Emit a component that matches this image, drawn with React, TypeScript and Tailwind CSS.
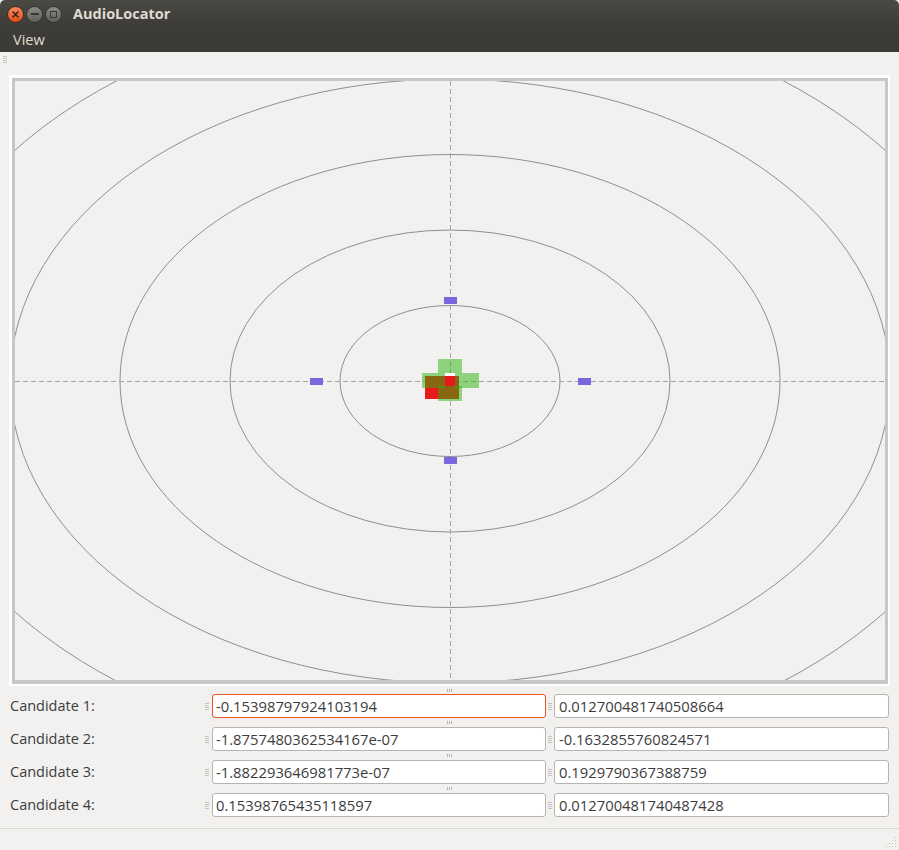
import React from 'react';

const candidates = [
  ['-0.15398797924103194', '0.012700481740508664'],
  ['-1.8757480362534167e-07', '-0.1632855760824571'],
  ['-1.882293646981773e-07', '0.1929790367388759'],
  ['0.15398765435118597', '0.012700481740487428'],
];

// little "≡" grip drawn by Qt splitters / toolbars
function HGrip() {
  return (
    <div className="flex flex-col gap-[1px] w-[4px]">
      <div className="h-[1px] bg-[#c4c2bf]" />
      <div className="h-[1px] bg-[#c4c2bf]" />
      <div className="h-[1px] bg-[#c4c2bf]" />
      <div className="h-[1px] bg-[#c4c2bf]" />
    </div>
  );
}

function VGrip() {
  return (
    <div className="flex gap-[1px] h-[3px]">
      <div className="w-[1px] bg-[#b9b7b4]" />
      <div className="w-[1px] bg-[#b9b7b4]" />
      <div className="w-[1px] bg-[#b9b7b4]" />
    </div>
  );
}

function Plot() {
  const cx = 435;
  const cy = 300;
  const rings = [1, 2, 3, 4, 5];
  return (
    <svg width="870" height="599" className="block">
      {rings.map(k => (
        <ellipse key={k} cx={cx} cy={cy} rx={110 * k} ry={75.5 * k} fill="none" stroke="#8f8f8f" strokeWidth="1" />
      ))}
      <line x1="0" y1={cy + 0.5} x2="870" y2={cy + 0.5} stroke="#a3a3a3" strokeDasharray="5 3" />
      <line x1={cx + 0.5} y1="0" x2={cx + 0.5} y2="599" stroke="#a3a3a3" strokeDasharray="5 3" />

      {/* microphones */}
      <rect x="429" y="216" width="13" height="7" fill="#7a67de" />
      <rect x="429" y="376" width="13" height="7" fill="#7a67de" />
      <rect x="295" y="297" width="13" height="7" fill="#7a67de" />
      <rect x="563" y="297" width="13" height="7" fill="#7a67de" />

      {/* estimate */}
      <rect x="430" y="292" width="10" height="3" fill="#ffffff" />
      <rect x="410" y="295" width="34" height="23" fill="#e8191b" />

      {/* candidates */}
      <g fill="rgb(40,180,10)" fillOpacity="0.5">
        <rect x="423" y="278" width="24" height="14" />
        <rect x="407" y="292" width="23" height="15" />
        <rect x="440" y="292" width="24" height="15" />
        <rect x="423" y="305" width="24" height="15" />
      </g>
    </svg>
  );
}

export default function App() {
  return (
    <div className="w-[899px] h-[850px] flex flex-col bg-[#f2f1f0] font-['Open_Sans',sans-serif] text-[14.5px] text-[#3c3c3c] overflow-hidden">
      {/* title bar */}
      <div className="h-[28px] flex items-center bg-gradient-to-b from-[#4a4944] to-[#3c3b37] rounded-t-[5px]">
        <div className="flex items-center gap-[2px] pl-[7px]">
          <div className="w-[17px] h-[17px] rounded-full bg-gradient-to-b from-[#f58a5b] to-[#df4a16] border border-[#3a2a22] flex items-center justify-center">
            <svg width="7" height="7" viewBox="0 0 7 7">
              <path d="M1 1L6 6M6 1L1 6" stroke="#3b2316" strokeWidth="1.6" strokeLinecap="round" />
            </svg>
          </div>
          <div className="w-[17px] h-[17px] rounded-full bg-gradient-to-b from-[#8c8b85] to-[#5f5e5a] border border-[#33322f] flex items-center justify-center">
            <div className="w-[8px] h-[2px] bg-[#3a3935]" />
          </div>
          <div className="w-[17px] h-[17px] rounded-full bg-gradient-to-b from-[#8c8b85] to-[#5f5e5a] border border-[#33322f] flex items-center justify-center">
            <div className="w-[7px] h-[7px] border-[1.5px] border-[#3a3935]" />
          </div>
        </div>
        <span className="ml-[11px] font-bold text-[14.5px] text-[#dfdbd2]">AudioLocator</span>
      </div>

      {/* menu bar */}
      <div className="h-[24px] flex items-center bg-[#3c3b37] pl-[13px]">
        <span className="text-[#dfdbd2]">View</span>
      </div>

      {/* toolbar handle */}
      <div className="h-[23px] pl-[3px] pt-[4px]">
        <HGrip />
      </div>

      {/* plot frame */}
      <div className="px-[9px]">
        <div className="h-[611px] border-t-[3px] border-l-[3px] border-r-2 border-b-2 border-white">
          <div className="h-full border-t-[3px] border-l-[3px] border-r-[3px] border-b-[4px] border-[#c8c7c5] bg-[#f2f1f0]">
            <Plot />
          </div>
        </div>
      </div>

      <div className="h-[8px] flex items-center justify-center">
        <VGrip />
      </div>

      {/* candidate rows */}
      <div className="flex flex-col px-[9px]">
        {candidates.map(([a, b], i) => (
          <React.Fragment key={i}>
            {i > 0 && (
              <div className="h-[9px] flex items-center justify-center">
                <VGrip />
              </div>
            )}
            <div className="h-[24px] flex items-center">
              <div className="w-[193px] pl-[1px]">Candidate {i + 1}:</div>
              <div className="w-[10px] flex justify-center">
                <HGrip />
              </div>
              <div
                className={
                  i === 0
                    ? 'w-[334px] h-full bg-white border border-[#e6541f] rounded-[3px] pl-[3px] flex items-center text-[14.8px]'
                    : 'w-[334px] h-full bg-white border border-[#b7b4b0] rounded-[3px] pl-[3px] flex items-center text-[14.8px]'
                }
              >
                {a}
              </div>
              <div className="w-[8px] flex justify-center">
                <HGrip />
              </div>
              <div className="w-[335px] h-full bg-white border border-[#b7b4b0] rounded-[3px] pl-[4px] flex items-center text-[14.8px]">
                {b}
              </div>
            </div>
          </React.Fragment>
        ))}
      </div>

      <div className="h-[11px]" />
      <div className="h-[1px] bg-[#d9d7d4]" />

      {/* status bar */}
      <div className="flex-1 flex justify-end items-end pr-[2px] pb-[2px]">
        <svg width="12" height="12" viewBox="0 0 12 12">
          <g fill="#c5c3c0">
            <rect x="10" y="1" width="1" height="1" />
            <rect x="7" y="4" width="1" height="1" />
            <rect x="10" y="4" width="1" height="1" />
            <rect x="4" y="7" width="1" height="1" />
            <rect x="7" y="7" width="1" height="1" />
            <rect x="10" y="7" width="1" height="1" />
            <rect x="1" y="10" width="1" height="1" />
            <rect x="4" y="10" width="1" height="1" />
            <rect x="7" y="10" width="1" height="1" />
            <rect x="10" y="10" width="1" height="1" />
          </g>
        </svg>
      </div>
    </div>
  );
}
